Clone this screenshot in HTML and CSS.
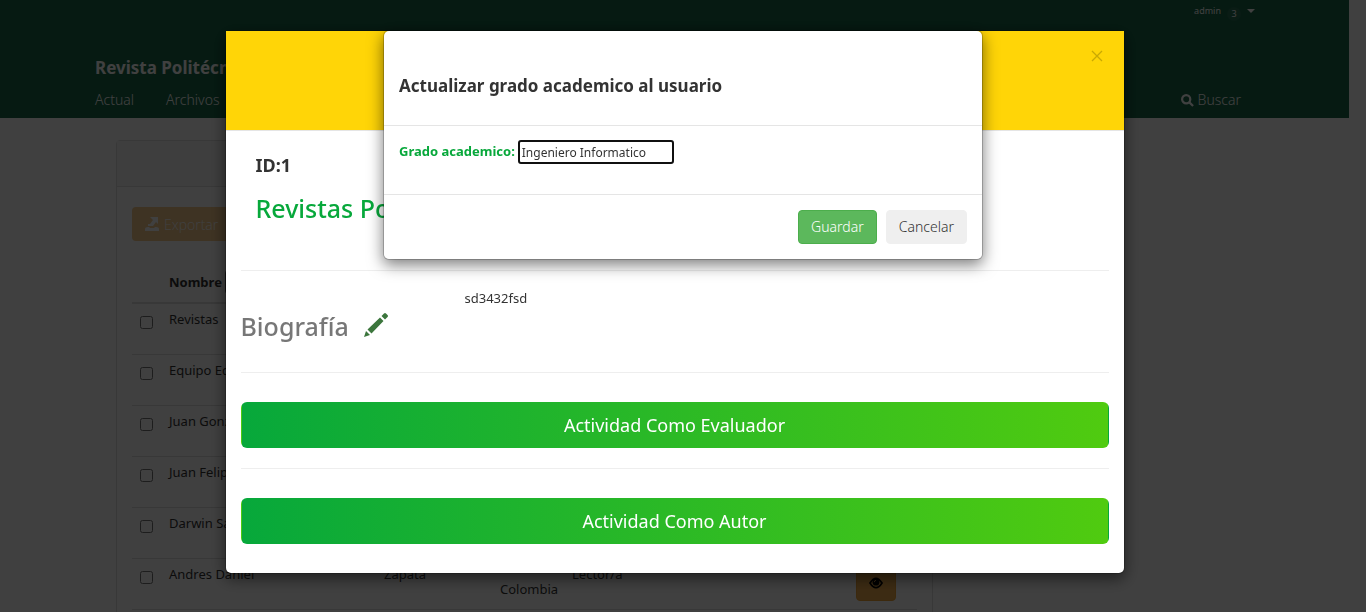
FILE: index.html
```html
<!DOCTYPE html>
<html lang="es">
<head>
<meta charset="utf-8">
<title>Revista Politécnica</title>
<link rel="stylesheet" href="styles.css">
</head>
<body>
<div class="page">
  <header class="site-header">
    <div class="user-bar">
      <a href="#">admin</a><span class="task-count">3</span><span class="caret"></span>
    </div>
    <a class="site-name" href="#">Revista Politécnica</a>
    <nav class="site-nav">
      <a href="#">Actual</a>
      <a href="#">Archivos</a>
      <a class="search" href="#"><svg viewBox="0 0 14 14"><circle cx="5.6" cy="5.6" r="4.4"/><path d="M9 9l4 4"/></svg>Buscar</a>
    </nav>
  </header>
  <main class="panel">
    <div class="panel-heading"></div>
    <div class="panel-body">
      <button class="export" type="button"><svg viewBox="0 0 14 14"><path d="M0 14v-2q0-2 3-2h1l1 1h4l1-1h1q3 0 3 2v2zM5 0h8v7l-2-2-3 4H3V7h2l3-4z"/></svg>Exportar</button>
      <table class="users">
        <colgroup><col class="c-check"><col class="c-name"><col class="c-last"><col class="c-country"><col class="c-role"><col class="c-action"></colgroup>
        <thead><tr><th></th><th><label for="filter">Nombre</label> <input id="filter" class="filter" type="text"></th><th></th><th></th><th></th><th></th></tr></thead>
        <tbody>
          <tr><td><input type="checkbox" aria-label="Revistas"></td><td>Revistas</td><td></td><td></td><td></td><td></td></tr>
          <tr><td><input type="checkbox" aria-label="Equipo"></td><td>Equipo Editorial</td><td></td><td></td><td></td><td></td></tr>
          <tr><td><input type="checkbox" aria-label="Juan Gonzalo"></td><td>Juan Gonzalo</td><td></td><td></td><td></td><td></td></tr>
          <tr><td><input type="checkbox" aria-label="Juan Felipe"></td><td>Juan Felipe</td><td></td><td></td><td></td><td></td></tr>
          <tr><td><input type="checkbox" aria-label="Darwin"></td><td>Darwin Santiago</td><td></td><td></td><td></td><td></td></tr>
          <tr><td><input type="checkbox" aria-label="Andres Daniel"></td><td>Andres Daniel</td><td>Zapata</td><td class="country">Colombia</td><td>Lector/a</td><td class="action"><button class="view" type="button" aria-label="Ver"><svg viewBox="0 0 16 14"><path d="M1 7q7-11 14 0q-7 11-14 0z" fill="none" stroke="currentColor" stroke-width="2"/><circle cx="8" cy="6" r="4"/><path d="M6 6q0-2 2-2" fill="none" stroke="#f0ad4e"/></svg></button></td></tr>
        </tbody>
      </table>
    </div>
  </main>
</div>
<div class="backdrop"></div>
<div class="layer profile-layer">
  <section class="modal profile" role="dialog" aria-label="Usuario">
    <header class="profile-head"><button class="close" type="button" aria-label="Cerrar"><svg viewBox="0 0 12 12"><path d="M1 1l10 10M11 1L1 11"/></svg></button></header>
    <div class="profile-body">
      <div class="identity"><h4>ID:1</h4><h2>Revistas Politécnica</h2></div>
      <hr>
      <div class="bio"><h2>Biografía<button type="button" class="edit" aria-label="Editar biografía"><svg viewBox="0 0 24 24"><path d="M0 24l2-6 4 4zM3.5 16.5L16 4.500l3.500 3.500L7.500 20.500zM17.500 3L20 .5q1-1 2 0l1.500 1.500q1 1 0 2L21 6.500z"/></svg></button></h2><p>sd3432fsd</p></div>
      <hr>
      <button class="activity" type="button">Actividad Como Evaluador</button>
      <hr>
      <button class="activity" type="button">Actividad Como Autor</button>
    </div>
  </section>
</div>
<div class="layer">
  <form class="modal degree" role="dialog" aria-labelledby="degree-title">
    <header class="degree-head"><h4 id="degree-title">Actualizar grado academico al usuario</h4></header>
    <div class="degree-body"><label for="degree">Grado academico:</label><input id="degree" type="text" value="Ingeniero Informatico" autofocus></div>
    <footer class="degree-foot"><button class="btn save" type="button">Guardar</button><button class="btn" type="button">Cancelar</button></footer>
  </form>
</div>
</body>
</html>
```
FILE: styles.css
```css
* { box-sizing: border-box; }
body { margin: 0; height: 100vh; overflow: hidden; background: #fff; color: #333; font: 13px/20px "Noto Sans", sans-serif; }
button, input { font: inherit; color: inherit; }
button { cursor: pointer; }
h2, h4, p { margin: 0; }
a { color: inherit; text-decoration: none; }
svg { fill: currentColor; }

.page { height: 100vh; overflow: hidden; padding-right: 17px; }
.site-header { height: 118px; padding: 0 108px 0 95px; background: #186848; color: #fff; }
.user-bar { display: flex; justify-content: flex-end; gap: 6px; height: 22px; font-size: 9px; line-height: 22px; margin-right: -14px; }
.task-count { width: 14px; height: 14px; margin-top: 7px; border-radius: 7px; background: #286f54; line-height: 14px; text-align: center; }
.caret { margin-top: 9px; height: 4px; border: 4px solid transparent; border-top-color: #fff; border-bottom: 0; }
.site-name { display: block; margin-top: 34px; font-size: 17px; line-height: 24px; font-weight: 700; }
.site-nav { display: flex; gap: 32px; margin-top: 10px; font: 300 14px/20px "Noto Sans", sans-serif; }
.search { display: flex; align-items: center; gap: 4px; margin-left: auto; }
.search svg { width: 13px; height: 13px; fill: none; stroke: currentColor; stroke-width: 2.400; }

.panel { margin: 22px 416px 0 116px; border: 1px solid #ddd; border-radius: 4px; }
.panel-heading { height: 46px; background: #f5f5f5; border-bottom: 1px solid #ddd; }
.panel-body { padding: 20px 15px; }
.export { display: flex; align-items: center; gap: 5px; width: 116px; height: 34px; padding: 0 13px; border: 0; border-radius: 4px; background: #f0ad4e; color: #fff; font: 300 14px "Open Sans", sans-serif; opacity: .65; }
.export svg { width: 14px; height: 14px; }
.users { width: 100%; margin-top: 20px; border-collapse: collapse; table-layout: fixed; }
.c-check { width: 29px; } .c-name { width: 215px; } .c-last { width: 116px; } .c-country { width: 72px; } .c-action { width: 69px; }
.users th { height: 42px; padding: 0 8px; text-align: left; border-bottom: 2px solid #ddd; white-space: nowrap; }
.users td { height: 51px; padding: 5px 8px; vertical-align: top; border-bottom: 1px solid #ddd; }
.users .country { padding-top: 20px; }
.users .action { padding: 8px; }
.users input[type="checkbox"] { display: block; width: 13px; height: 13px; margin: 7px 0 0; }
.filter { width: 100px; height: 24px; border: 1px solid #555; border-radius: 3px; }
.view { width: 40px; height: 34px; border: 1px solid #eea236; border-radius: 4px; background: #f0ad4e; color: #000; padding: 0; }
.view svg { width: 14px; height: 12px; }

.backdrop { position: fixed; inset: 0; background: rgba(0, 0, 0, .75); }
.layer { position: fixed; inset: 0; padding-top: 30px; }
.profile-layer { padding-right: 17px; }
.modal { margin: 0 auto; background: #fff; background-clip: padding-box; border: 1px solid rgba(0, 0, 0, .2); border-radius: 6px; box-shadow: 0 5px 15px rgba(0, 0, 0, .5); }
.profile { max-width: 900px; }
.profile-head { height: 100px; padding: 13px 15px; background: #ffd507; border-bottom: 1px solid #e5e5e5; }
.close { display: block; margin-left: auto; width: 24px; height: 20px; padding: 0; border: 0; background: none; color: #c9a904; }
.close svg { width: 12px; height: 12px; display: block; margin: 4px auto 0; stroke: currentColor; stroke-width: 1.3; }
.profile-body { padding: 15px 15px 29px; }
.profile hr { margin: 0; border: 0; border-top: 1px solid #eee; }
.identity { height: 124px; padding: 7px 15px 0; }
.identity h4 { font-size: 18px; line-height: 24px; }
.profile h2 { font: 500 25px/32px "Noto Sans", sans-serif; color: #777; }
.identity h2 { margin-top: 15px; color: #07a83b; }
.bio { display: grid; grid-template-columns: 224px 1fr; height: 101px; padding-top: 17px; }
.bio h2 { margin-top: 22px; white-space: nowrap; }
.edit { margin-left: 15px; padding: 0; border: 0; background: none; color: #3c763d; vertical-align: top; }
.edit svg { display: block; width: 24px; height: 24px; margin-top: 3px; }
.activity { display: block; width: 100%; height: 46px; margin: 29px 0 20px; border: 1px solid transparent; border-radius: 6px; background: linear-gradient(to right, #07a83b, #50cb10); color: #fff; font-size: 18px; line-height: 24px; }
.activity:last-child { margin-bottom: 0; }

.degree { max-width: 600px; }
.degree-head { height: 95px; padding: 43px 15px 0; border-bottom: 1px solid #e5e5e5; }
.degree-head h4 { font-size: 17px; line-height: 24px; }
.degree-body { display: flex; gap: 3px; height: 69px; padding: 14px 15px; border-bottom: 1px solid #e5e5e5; }
.degree-body label { color: #07a83b; font-weight: 700; line-height: 22px; }
.degree-body input { width: 156px; height: 24px; padding: 0 2px; border: 2px solid #101010; border-radius: 3px; outline: none; font-size: 12px; }
.degree-foot { display: flex; justify-content: flex-end; gap: 9px; padding: 15px; }
.btn { height: 34px; padding: 0 12px; border: 1px solid #efefef; border-radius: 4px; background: #efefef; font: 300 14px/20px "Noto Sans", sans-serif; }
.save { background: #5cb85c; border-color: #4cae4c; color: #fff; }
```
